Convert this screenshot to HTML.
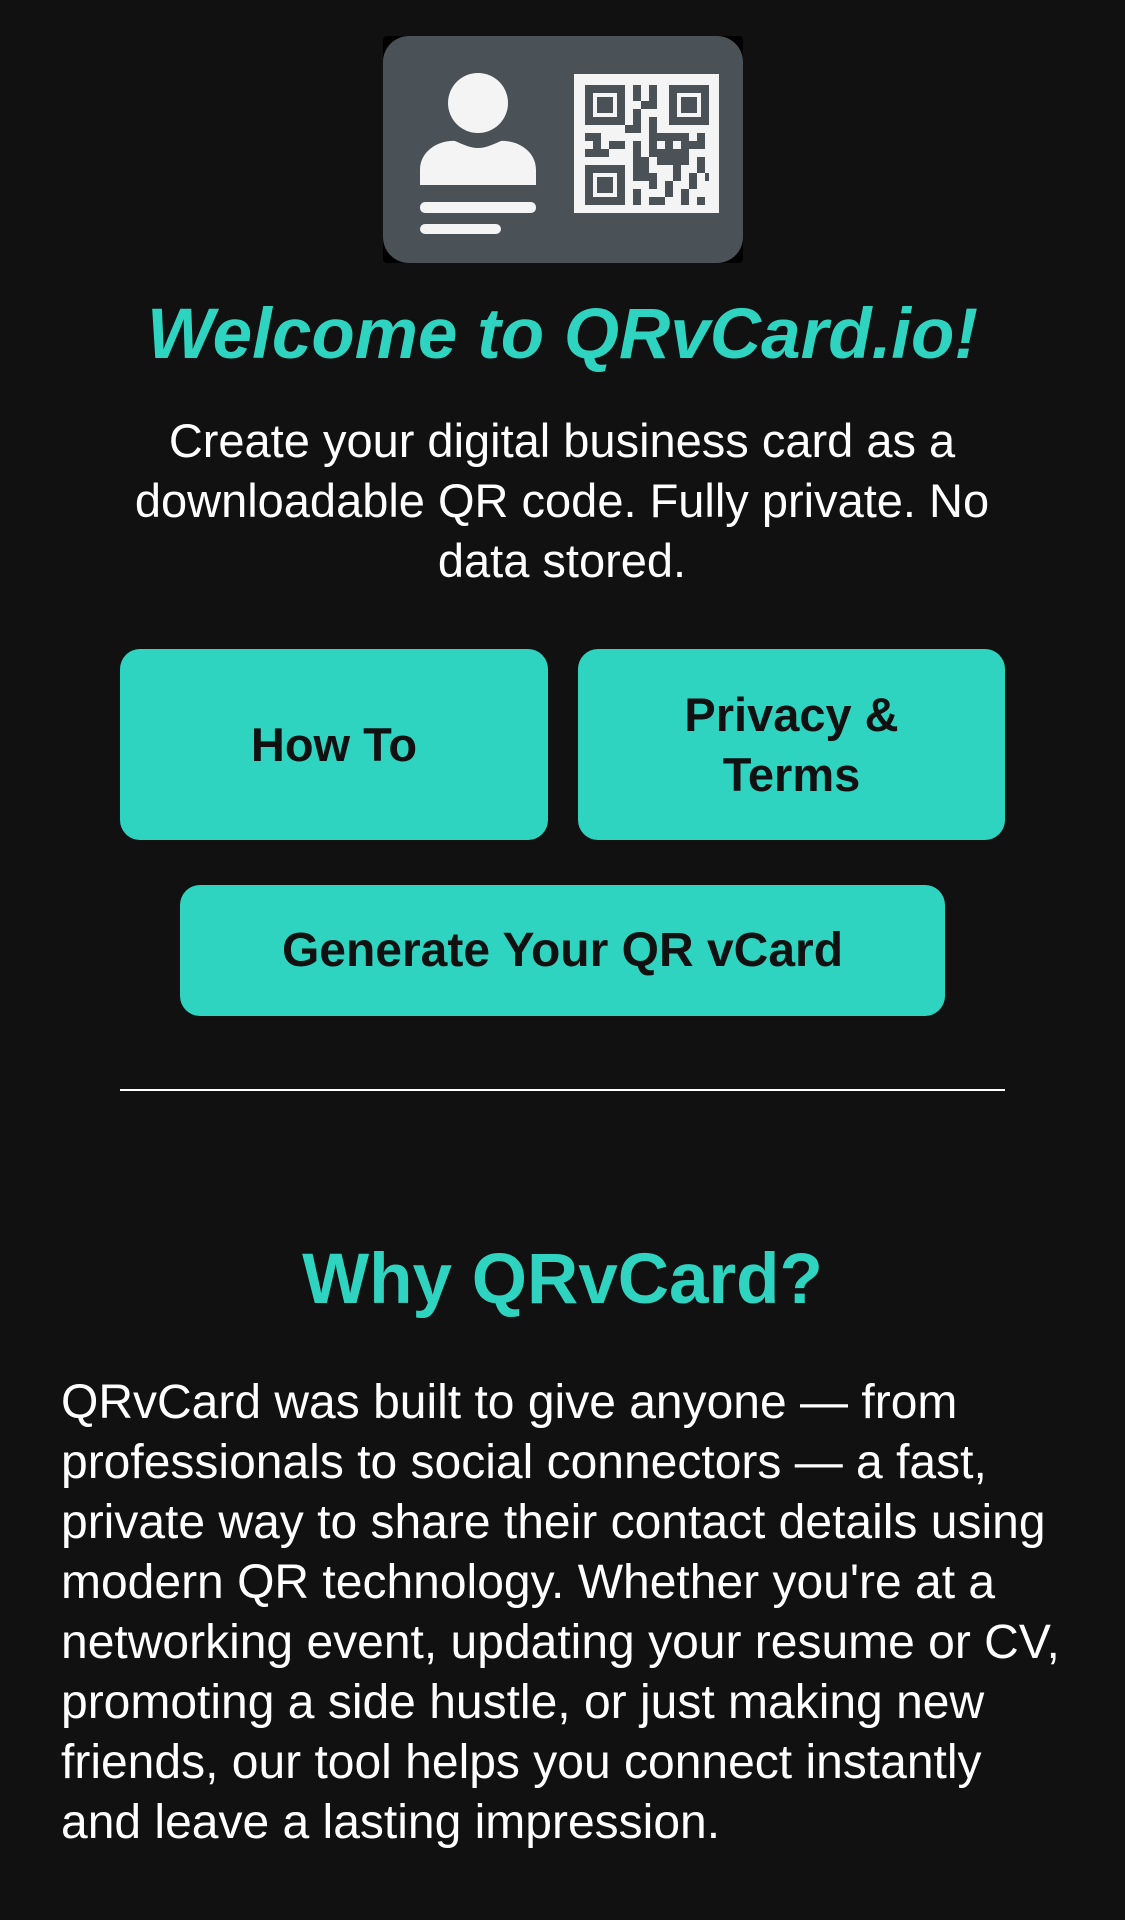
<!DOCTYPE html>
<html><head><meta charset="utf-8"><style>
html,body{margin:0;padding:0;background:#111;}
body{width:1125px;height:1920px;position:relative;overflow:hidden;font-family:"Liberation Sans",sans-serif;color:#fff;}
.card{position:absolute;left:383px;top:36px;width:360px;height:227px;background:#4a5258;border-radius:26px;}
.t{position:absolute;left:0;width:1125px;text-align:center;}
.btn{position:absolute;background:#2fd4c1;border-radius:20px;color:#111;font-weight:bold;font-size:47px;display:flex;align-items:center;justify-content:center;text-align:center;line-height:60px;}
</style></head><body>
<div style="position:absolute;left:383px;top:36px;width:360px;height:227px;background:#000;border-radius:4px"></div>
<div class="card"></div>
<svg style="position:absolute;left:0;top:0" width="1125" height="300">
<g fill="#f4f4f4">
<circle cx="478" cy="103" r="30"/>
<path d="M420 185 L420 170 C420 150 440 140 455 141 C462 144 470 148 478 148 C486 148 494 144 501 141 C516 140 536 150 536 170 L536 185 Z"/>
<rect x="420" y="202" width="116" height="11" rx="5"/>
<rect x="420" y="224" width="81" height="10" rx="5"/>
<rect x="574" y="74" width="145" height="139"/>
</g>
<g fill="#4a5258" transform="translate(585,85)">
<path d="M0 0h40v40h-40zM8 8v24h24v-24z" fill-rule="evenodd"/>
<rect x="12" y="12" width="16" height="16"/>
<path d="M84 0h40v40h-40zM92 8v24h24v-24z" fill-rule="evenodd"/>
<rect x="96" y="12" width="16" height="16"/>
<path d="M0 80h40v40h-40zM8 88v24h24v-24z" fill-rule="evenodd"/>
<rect x="12" y="92" width="16" height="16"/>
<rect x="48" y="0" width="8" height="16"/><rect x="64" y="0" width="8" height="24"/><rect x="56" y="16" width="16" height="8"/>
<rect x="48" y="24" width="8" height="24"/><rect x="40" y="40" width="16" height="8"/><rect x="64" y="32" width="8" height="16"/>
<rect x="0" y="48" width="16" height="8"/><rect x="8" y="48" width="8" height="24"/><rect x="0" y="64" width="24" height="8"/><rect x="24" y="56" width="16" height="8"/>
<rect x="48" y="56" width="8" height="40"/><rect x="56" y="72" width="8" height="24"/>
<rect x="64" y="48" width="32" height="8"/><rect x="64" y="56" width="8" height="16"/><rect x="80" y="56" width="8" height="8"/><rect x="72" y="64" width="32" height="16"/>
<rect x="96" y="48" width="8" height="16"/><rect x="112" y="48" width="8" height="16"/><rect x="104" y="56" width="8" height="8"/>
<rect x="112" y="72" width="8" height="16"/><rect x="88" y="80" width="8" height="16"/><rect x="104" y="88" width="8" height="16"/>
<rect x="64" y="88" width="8" height="16"/><rect x="48" y="104" width="8" height="16"/><rect x="64" y="112" width="16" height="8"/>
<rect x="80" y="96" width="8" height="16"/><rect x="96" y="104" width="8" height="16"/><rect x="112" y="112" width="8" height="8"/><rect x="120" y="88" width="4" height="8"/>
</g>
</svg>
<div class="t" style="top:295px;font-size:71px;font-weight:bold;font-style:italic;color:#2fd4c1;line-height:80px">Welcome to QRvCard.io!</div>
<div class="t" style="top:411px;font-size:47px;line-height:60px;left:112px;width:900px">Create your digital business card as a downloadable QR code. Fully private. No data stored.</div>
<div class="btn" style="left:120px;top:649px;width:428px;height:191px">How To</div>
<div class="btn" style="left:578px;top:649px;width:427px;height:191px">Privacy &amp;<br>Terms</div>
<div class="btn" style="left:180px;top:885px;width:765px;height:131px;font-size:48px">Generate Your QR vCard</div>
<div style="position:absolute;left:120px;top:1089px;width:885px;height:2px;background:#fff"></div>
<div class="t" style="top:1240px;font-size:71px;font-weight:bold;color:#2fd4c1;line-height:80px">Why QRvCard?</div>
<div style="position:absolute;left:61px;top:1373px;width:1010px;font-size:48px;line-height:60px">QRvCard was built to give anyone — from professionals to social connectors — a fast, private way to share their contact details using modern QR technology. Whether you're at a networking event, updating your resume or CV, promoting a side hustle, or just making new friends, our tool helps you connect instantly and leave a lasting impression.</div>
</body></html>
